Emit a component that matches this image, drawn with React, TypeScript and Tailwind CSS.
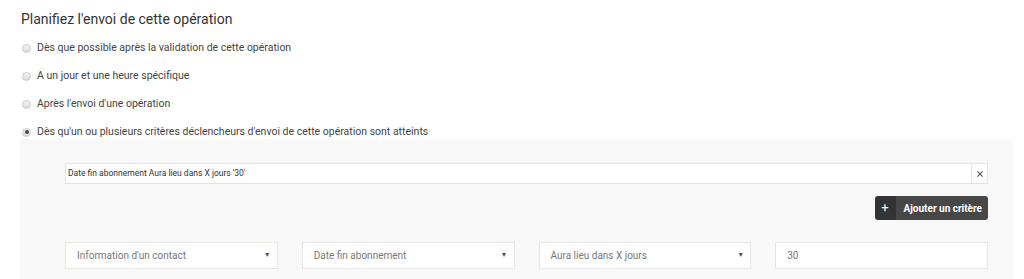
const options = [
  { label: "Dès que possible après la validation de cette opération", checked: false },
  { label: "A un jour et une heure spécifique", checked: false },
  { label: "Après l'envoi d'une opération", checked: false },
  {
    label: "Dès qu'un ou plusieurs critères déclencheurs d'envoi de cette opération sont atteints",
    checked: true,
  },
];

const selects = ["Information d'un contact", "Date fin abonnement", "Aura lieu dans X jours"];

function Radio({ checked }: { checked: boolean }) {
  return (
    <span className="w-[9px] h-[9px] rounded-full border border-[#c9c9c9] bg-gradient-to-b from-[#f4f4f4] to-[#dcdcdc] flex items-center justify-center shrink-0">
      {checked && <span className="w-[4px] h-[4px] rounded-full bg-[#444]" />}
    </span>
  );
}

export default function App() {
  return (
    <div className="w-[1024px] h-[279px] bg-white overflow-hidden font-['Roboto',sans-serif]">
      <div className="pl-[20px]">
        <h2 className="pt-[10px] h-[34px] pl-[1px] text-[14px] leading-[18px] text-[#333]">
          Planifiez l'envoi de cette opération
        </h2>
        <div className="flex flex-col">
          {options.map((o) => (
            <label key={o.label} className="h-[28px] flex items-center gap-[6px] pl-[2px] text-[10.5px] text-[#444]">
              <Radio checked={o.checked} />
              <span>{o.label}</span>
            </label>
          ))}
        </div>

        {/* trigger criteria panel */}
        <div className="w-[993px] mt-[-7px] h-[200px] bg-[#f8f8f8] pl-[45px] pr-[25px] pt-[24px]">
          <div className="h-[21px] flex bg-white border border-[#e3e3e3]">
            <div className="flex-1 flex items-center pl-[2px] text-[8.5px] text-[#333]">
              Date fin abonnement Aura lieu dans X jours '30'
            </div>
            <div className="w-[16px] border-l border-[#e3e3e3] flex items-center justify-center text-[#555]">
              <svg width="6" height="6" viewBox="0 0 7 7" stroke="currentColor" strokeWidth="1.3">
                <path d="M0.5 0.5L6.5 6.5M6.5 0.5L0.5 6.5" />
              </svg>
            </div>
          </div>

          <div className="flex justify-end mt-[12px]">
            <button className="h-[24px] flex rounded-[3px] overflow-hidden text-white text-[10px] font-bold">
              <span className="w-[21px] bg-[#333] flex items-center justify-center text-[13px] font-normal">+</span>
              <span className="bg-[#474747] flex items-center pl-[8px] pr-[6px]">Ajouter un critère</span>
            </button>
          </div>

          <div className="grid grid-cols-4 gap-[24px] mt-[22px]">
            {selects.map((s) => (
              <div
                key={s}
                className="h-[27px] bg-white border border-[#e6e6e6] flex items-center justify-between pl-[11px] pr-[6px] text-[10px] text-[#777]"
              >
                <span>{s}</span>
                <span className="text-[7px] text-[#555]">▼</span>
              </div>
            ))}
            <div className="h-[27px] bg-white border border-[#e6e6e6] flex items-center pl-[11px] text-[10px] text-[#777]">
              30
            </div>
          </div>
        </div>
      </div>
    </div>
  );
}
